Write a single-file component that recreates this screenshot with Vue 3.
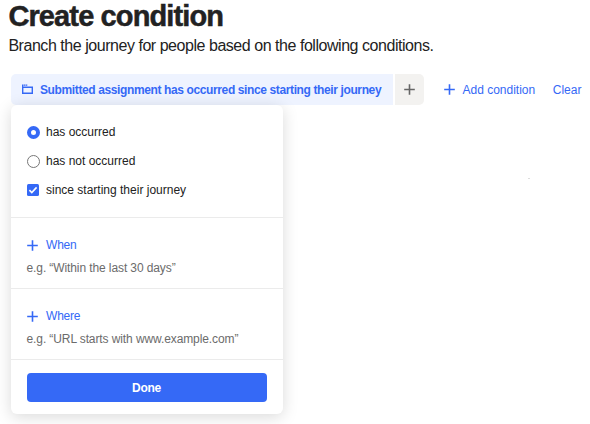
<template>
  <main class="page">
    <h1 class="title">Create condition</h1>
    <p class="subtitle">Branch the journey for people based on the following conditions.</p>

    <div class="toolbar">
      <div class="chip-wrap">
        <button class="chip" @click="open = !open">
          <svg class="chip-icon" width="12" height="11" viewBox="0 0 12 11" fill="none" stroke="currentColor">
            <path d="M.7 3.2H10.3V9.3H.7Z" stroke-width="1.4" />
            <path d="M0 1.2H5.4" stroke-width="1.2" stroke-dasharray="1.5 .4" />
            <path d="M.6 1V3.5" stroke-width="1.1" />
          </svg>
          <span>Submitted assignment has occurred since starting their journey</span>
        </button>

        <div v-if="open" class="popover">
          <section class="options">
            <label v-for="option in options" :key="option.value" class="option">
              <input v-model="occurrence" class="native" type="radio" :value="option.value" />
              <span :class="['radio', { checked: occurrence === option.value }]"></span>
              <span>{{ option.label }}</span>
            </label>
            <label class="option">
              <input v-model="sinceStart" class="native" type="checkbox" />
              <span :class="['checkbox', { checked: sinceStart }]">
                <svg v-if="sinceStart" width="12" height="12" viewBox="0 0 12 12" fill="none">
                  <path d="M2.4 6.1L4.8 8.5L9.6 3.4" stroke="#fff" stroke-width="1.6" />
                </svg>
              </span>
              <span>since starting their journey</span>
            </label>
          </section>

          <section v-for="filter in filters" :key="filter.label" class="filter">
            <button class="link filter-link">
              <svg class="plus" width="11" height="11" viewBox="0 0 11 11">
                <path d="M5.5 .2V10.8M.2 5.5H10.8" />
              </svg>
              <span>{{ filter.label }}</span>
            </button>
            <p class="hint">{{ filter.hint }}</p>
          </section>

          <footer class="footer">
            <button class="done" @click="open = false">Done</button>
          </footer>
        </div>
      </div>

      <button class="append" aria-label="Add">
        <svg class="plus" width="11" height="11" viewBox="0 0 11 11">
          <path d="M5.5 .2V10.8M.2 5.5H10.8" />
        </svg>
      </button>
      <button class="link add">
        <svg class="plus" width="11" height="11" viewBox="0 0 11 11">
          <path d="M5.5 .2V10.8M.2 5.5H10.8" />
        </svg>
        <span>Add condition</span>
      </button>
      <button class="link clear">Clear</button>
    </div>

    <span class="speck"></span>
  </main>
</template>

<script setup>
import { ref } from 'vue'

const open = ref(true)
const occurrence = ref('has')
const sinceStart = ref(true)

const options = [
  { value: 'has', label: 'has occurred' },
  { value: 'has-not', label: 'has not occurred' },
]

const filters = [
  { label: 'When', hint: 'e.g. “Within the last 30 days”' },
  { label: 'Where', hint: 'e.g. “URL starts with www.example.com”' },
]
</script>

<style>
body {
  margin: 0;
  background: #fff;
}
</style>

<style scoped>
.page {
  position: relative;
  box-sizing: border-box;
  width: 590px;
  height: 424px;
  overflow: hidden;
  color: #222;
  font-family: "Liberation Sans", Arial, sans-serif;
  font-size: 12px;
}

button {
  padding: 0;
  border: 0;
  background: none;
  font: inherit;
  cursor: pointer;
}

.title {
  margin: 0 0 0 8.4px;
  font-size: 29px;
  line-height: 33px;
  letter-spacing: -0.88px;
  white-space: nowrap;
  -webkit-text-stroke: 0.5px currentColor;
}

.subtitle {
  margin: 3px 0 0 8.4px;
  font-size: 16px;
  line-height: 20px;
  letter-spacing: -0.46px;
  white-space: nowrap;
}

.toolbar {
  display: flex;
  margin: 18px 0 0 10.5px;
  height: 31px;
}

.chip-wrap {
  position: relative;
  width: 382.5px;
}

.chip {
  display: flex;
  align-items: center;
  box-sizing: border-box;
  width: 100%;
  height: 31px;
  padding-left: 11px;
  border-radius: 5px 0 0 5px;
  background: #eef3ff;
  color: #3569f6;
  font-weight: 700;
  letter-spacing: -0.38px;
  white-space: nowrap;
}

.chip-icon {
  flex: none;
  margin-right: 6.5px;
}

.append {
  display: flex;
  align-items: center;
  justify-content: center;
  width: 28.5px;
  margin-left: 2px;
  border-radius: 0 5px 5px 0;
  background: #f3f2f0;
  color: #666;
}

.plus {
  flex: none;
  fill: none;
  stroke: currentColor;
  stroke-width: 1.6;
}

.link {
  display: flex;
  align-items: center;
  color: #3569f6;
  white-space: nowrap;
}

.add {
  gap: 7.5px;
  margin-left: 20.5px;
}

.clear {
  margin-left: 17.5px;
}

.popover {
  position: absolute;
  top: 31px;
  left: 0;
  z-index: 1;
  width: 272px;
  height: 309px;
  border-radius: 6px;
  background: #fff;
  box-shadow: 0 3px 16px rgba(0, 0, 0, 0.15);
}

.options {
  display: flex;
  flex-direction: column;
  gap: 15px;
  box-sizing: border-box;
  height: 112px;
  padding: 20px 16px 0;
}

.option {
  display: flex;
  align-items: center;
  gap: 6.5px;
  height: 14px;
}

.native {
  position: absolute;
  opacity: 0;
  pointer-events: none;
}

.radio {
  box-sizing: border-box;
  width: 13px;
  height: 13px;
  border: 1px solid #777;
  border-radius: 50%;
}

.radio.checked {
  border: 4px solid #3569f6;
}

.checkbox {
  box-sizing: border-box;
  width: 12px;
  height: 12px;
  margin: 0 .5px;
  border: 1px solid #777;
  border-radius: 1.5px;
}

.checkbox.checked {
  border: 0;
  background: #3569f6;
}

.checkbox svg {
  display: block;
}

.filter {
  box-sizing: border-box;
  height: 71px;
  padding: 19px 16px 0;
  border-top: 1px solid #ebebeb;
}

.filter-link {
  gap: 8px;
  height: 16px;
  padding-left: .5px;
  letter-spacing: -0.2px;
}

.hint {
  margin: 7px 0 0;
  color: #6b6b6b;
  line-height: 16px;
  letter-spacing: -0.1px;
  white-space: nowrap;
}

.footer {
  padding: 13px 16px 0;
  border-top: 1px solid #ebebeb;
}

.done {
  display: block;
  width: 100%;
  height: 29px;
  border-radius: 4px;
  background: #3569f6;
  color: #fff;
  font-weight: 700;
  letter-spacing: -0.3px;
}

.speck {
  position: absolute;
  top: 178px;
  left: 528px;
  width: 2px;
  height: 1px;
  background: #ddd;
}
</style>
